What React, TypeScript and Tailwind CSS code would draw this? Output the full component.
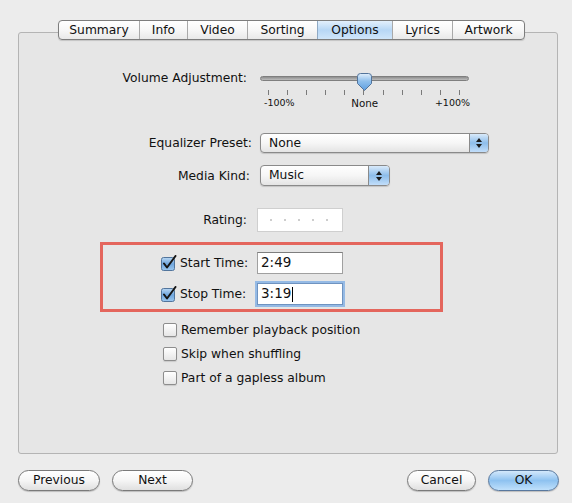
import React from "react";

const tabs = [
  { label: "Summary", cls: "w-[80px]" },
  { label: "Info", cls: "w-[48px] border-l border-[#a9a9a9]" },
  { label: "Video", cls: "w-[60px] border-l border-[#a9a9a9]" },
  { label: "Sorting", cls: "w-[70px] border-l border-[#a9a9a9]" },
  { label: "Options", cls: "w-[75px] border-l border-[#8fa9c4] bg-linear-to-b from-[#e3f0fc] via-[#b7d7f5] to-[#cfe5fa]", },
  { label: "Lyrics", cls: "w-[60px] border-l border-[#a9a9a9]" },
  { label: "Artwork", cls: "w-[72px] border-l border-[#a9a9a9]" },
];

function Arrows() {
  return (
    <div className="flex flex-col items-center justify-center gap-[2px]">
      <svg width="6" height="4" viewBox="0 0 6 4">
        <path d="M3 0 L6 4 L0 4 Z" fill="#1b1b1b" />
      </svg>
      <svg width="6" height="4" viewBox="0 0 6 4">
        <path d="M0 0 L6 0 L3 4 Z" fill="#1b1b1b" />
      </svg>
    </div>
  );
}

function CheckOn() {
  return (
    <svg width="16" height="16" viewBox="0 0 16 16" className="shrink-0">
      <defs>
        <linearGradient id="cb" x1="0" y1="0" x2="0" y2="1">
          <stop offset="0" stopColor="#b9d7f3" />
          <stop offset="0.5" stopColor="#6fa6de" />
          <stop offset="1" stopColor="#9cc8f0" />
        </linearGradient>
      </defs>
      <rect x="0.5" y="2.5" width="13" height="13" rx="2" fill="url(#cb)" stroke="#52759c" />
      <path d="M3 8.5 L6 12.5 L14.5 1" fill="none" stroke="#151515" strokeWidth="2" strokeLinecap="round" strokeLinejoin="round" />
    </svg>
  );
}

function CheckOff() {
  return (
    <div className="w-[14px] h-[14px] shrink-0 rounded-[2px] border border-[#8d8d8d] bg-linear-to-b from-white to-[#e6e6e6] shadow-[0_1px_1px_rgba(0,0,0,0.12)]" />
  );
}

function Thumb() {
  return (
    <svg width="17" height="20" viewBox="0 0 17 20">
      <defs>
        <linearGradient id="th" x1="0" y1="0" x2="0" y2="1">
          <stop offset="0" stopColor="#e2effb" />
          <stop offset="0.45" stopColor="#8fbfec" />
          <stop offset="1" stopColor="#5d9ee0" />
        </linearGradient>
      </defs>
      <path d="M1.5 4.5 Q1.5 1.5 4.5 1.5 H12.5 Q15.5 1.5 15.5 4.5 V11.5 L8.5 18.5 L1.5 11.5 Z" fill="url(#th)" stroke="#52739a" />
    </svg>
  );
}

export default function App() {
  return (
    <div className="w-[572px] h-[503px] bg-[#ececec] pt-[32px] pl-[18px] flex flex-col whitespace-nowrap font-['DejaVu_Sans',sans-serif] text-[12.3px] text-[#111]">
      {/* group box */}
      <div className="w-[540px] h-[422px] border border-[#b4b4b4] rounded-[3px] bg-[#e6e6e6] flex flex-col">
        {/* tabs */}
        <div className="-mt-[13px] ml-[39px] self-start flex h-[20px] rounded-[4px] border border-[#7d7d7d] bg-linear-to-b from-white via-[#f7f7f7] to-[#e9e9e9] shadow-[0_1px_1px_rgba(0,0,0,0.15)] overflow-hidden">
          {tabs.map((t) => (
            <div key={t.label} className={"h-full flex items-center justify-center leading-none " + t.cls}>
              {t.label}
            </div>
          ))}
        </div>

        {/* volume */}
        <div className="mt-[30px] flex items-start">
          <div className="w-[228px] text-right leading-[16px]">Volume Adjustment:</div>
          <div className="ml-[13px] w-[210px] flex flex-col">
            <div className="relative h-[20px]">
              <div className="mt-[6px] h-[5px] w-[209px] rounded-full border border-[#7f7f7f] bg-linear-to-b from-[#8e8e8e] to-[#bdbdbd]" />
              <div className="absolute left-[96px] top-[2px]">
                <Thumb />
              </div>
            </div>
            <div className="ml-[8px] w-[192px] h-[5px] flex justify-between">
              {Array.from({ length: 11 }).map((_, i) => (
                <div key={i} className="w-[1px] h-[5px] bg-[#7a7a7a]" />
              ))}
            </div>
            <div className="mt-[3px] pl-[4px] flex justify-between text-[9.5px] leading-[10px]">
              <span>-100%</span>
              <span className="text-[10.3px]">None</span>
              <span>+100%</span>
            </div>
          </div>
        </div>

        {/* equalizer */}
        <div className="mt-[25px] flex items-center">
          <div className="w-[233px] text-right leading-[16px]">Equalizer Preset:</div>
          <div className="ml-[8px] flex h-[20px] w-[229px] rounded-[4px] border border-[#8a8a8a] bg-linear-to-b from-white via-[#f6f6f6] to-[#e4e4e4] shadow-[0_1px_1px_rgba(0,0,0,0.15)] overflow-hidden">
            <div className="flex-1 pl-[8px] flex items-center leading-none">None</div>
            <div className="w-[19px] border-l border-[#8a8a8a] bg-linear-to-b from-[#d9eafa] via-[#8dbdea] to-[#c2defa] flex items-center justify-center">
              <Arrows />
            </div>
          </div>
        </div>

        {/* media kind */}
        <div className="mt-[12px] flex items-center">
          <div className="w-[231px] text-right leading-[16px]">Media Kind:</div>
          <div className="ml-[10px] flex h-[21px] w-[130px] rounded-[4px] border border-[#8a8a8a] bg-linear-to-b from-white via-[#f6f6f6] to-[#e4e4e4] shadow-[0_1px_1px_rgba(0,0,0,0.15)] overflow-hidden">
            <div className="flex-1 pl-[8px] flex items-center leading-none">Music</div>
            <div className="w-[21px] border-l border-[#8a8a8a] bg-linear-to-b from-[#d9eafa] via-[#8dbdea] to-[#c2defa] flex items-center justify-center">
              <Arrows />
            </div>
          </div>
        </div>

        {/* rating */}
        <div className="mt-[22px] flex items-center">
          <div className="w-[228px] text-right leading-[16px]">Rating:</div>
          <div className="ml-[10px] h-[24px] w-[86px] bg-white border border-[#cfcfcf] flex items-center pl-[12px] gap-[12px]">
            {Array.from({ length: 5 }).map((_, i) => (
              <div key={i} className="w-[2px] h-[2px] rounded-full bg-[#bdbdbd]" />
            ))}
          </div>
        </div>

        {/* red annotation box */}
        <div className="mt-[10px] ml-[81px] w-[343px] h-[70px] border-[3px] border-[#e4665d] flex flex-col pt-[7px]">
          <div className="flex items-center">
            <div className="ml-[58px] w-[86px] shrink-0 flex items-center">
              <CheckOn />
              <span className="ml-[3px] leading-[16px]">Start Time:</span>
            </div>
            <div className="ml-[10px] h-[22px] w-[86px] shrink-0 bg-white border border-[#a0a0a0] border-t-[#7e7e7e] flex items-center pl-[3px] text-[13.5px] leading-none">
              2:49
            </div>
          </div>
          <div className="mt-[9px] flex items-center">
            <div className="ml-[58px] w-[86px] shrink-0 flex items-center">
              <CheckOn />
              <span className="ml-[3px] leading-[16px]">Stop Time:</span>
            </div>
            <div className="ml-[10px] h-[22px] w-[86px] shrink-0 bg-white border border-[#6f93c0] shadow-[0_0_0_2px_#95bae5] flex items-center pl-[3px] text-[13.5px] leading-none">
              3:19
              <span className="ml-[1px] w-[1px] h-[15px] bg-black" />
            </div>
          </div>
        </div>

        {/* checkboxes */}
        <div className="mt-[8px] ml-[144px] flex flex-col gap-[4px]">
          {["Remember playback position", "Skip when shuffling", "Part of a gapless album"].map((l) => (
            <div key={l} className="h-[20px] flex items-center">
              <CheckOff />
              <span className="ml-[4px] leading-[16px]">{l}</span>
            </div>
          ))}
        </div>
      </div>

      {/* bottom buttons */}
      <div className="mt-[16px] w-[541px] flex justify-between">
        <div className="flex gap-[12px]">
          <button className="h-[21px] w-[82px] rounded-full border border-[#7a7a7a] bg-linear-to-b from-white via-[#f5f5f5] to-[#e0e0e0] shadow-[0_1px_1px_rgba(0,0,0,0.2)] leading-none">
            Previous
          </button>
          <button className="h-[21px] w-[81px] rounded-full border border-[#7a7a7a] bg-linear-to-b from-white via-[#f5f5f5] to-[#e0e0e0] shadow-[0_1px_1px_rgba(0,0,0,0.2)] leading-none">
            Next
          </button>
        </div>
        <div className="flex gap-[12px]">
          <button className="h-[21px] w-[69px] rounded-full border border-[#7a7a7a] bg-linear-to-b from-white via-[#f5f5f5] to-[#e0e0e0] shadow-[0_1px_1px_rgba(0,0,0,0.2)] leading-none">
            Cancel
          </button>
          <button className="h-[21px] w-[71px] rounded-full border border-[#58789e] bg-linear-to-b from-[#d3e8fb] via-[#8ec2f0] to-[#bfe0fb] shadow-[0_1px_1px_rgba(0,0,0,0.2)] leading-none">
            OK
          </button>
        </div>
      </div>
    </div>
  );
}
